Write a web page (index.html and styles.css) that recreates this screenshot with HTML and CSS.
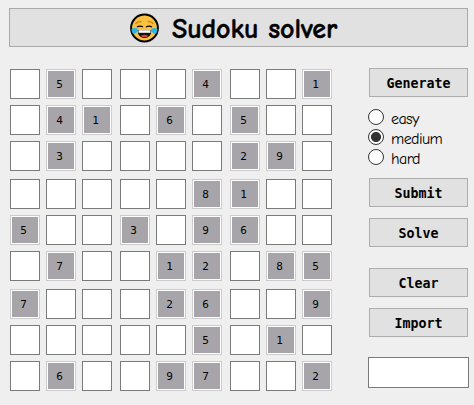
FILE: index.html
```html
<!DOCTYPE html>
<html lang="en">
<head>
    <meta charset="UTF-8">
    <meta name="viewport" content="width=device-width, initial-scale=1.0">
    <title>Sudoku solver</title>
    <link rel="stylesheet" href="styles.css">
</head>
<body>
    <header class="title-bar">
        <svg class="logo" viewBox="0 0 30 30">
            <circle cx="15" cy="15" r="13.4" fill="#fbc040" stroke="#000" stroke-width="2"/>
            <path d="M6 11Q7.500 8.500 12 8.500M18 8.500Q22.500 8.500 24 11" fill="none" stroke="#d38b16" stroke-width="1.7"/>
            <path d="M7.500 14Q10.500 12.200 13.500 14M16.500 14Q19.500 12.200 22.500 14" fill="none" stroke="#000" stroke-width="1.3"/>
            <path d="M8 17H22Q21.500 25 15 25Q8.500 25 8 17Z" fill="#111"/>
            <path d="M9 17.200H21V19.800H9Z" fill="#fff"/>
            <path d="M11 23Q15 20.500 19 23Q15 25.600 11 23Z" fill="#d8432b"/>
            <path d="M2 16Q4.500 14.500 8 15.500Q8.500 20 4.800 20.800Q2 20.500 2 16ZM28 16Q25.500 14.500 22 15.500Q21.500 20 25.200 20.800Q28 20.500 28 16Z" fill="#27b5e8"/>
        </svg>
        <h1>Sudoku solver</h1>
    </header>
    <main>
        <div class="board"></div>
        <div class="side">
            <button class="btn generate-btn">Generate</button>
            <div class="levels">
                <label><input type="radio" name="level"><span>easy</span></label>
                <label><input type="radio" name="level" checked><span>medium</span></label>
                <label><input type="radio" name="level"><span>hard</span></label>
            </div>
            <button class="btn">Submit</button>
            <button class="btn">Solve</button>
            <button class="btn clear-btn">Clear</button>
            <button class="btn">Import</button>
            <input class="import-field" type="text">
        </div>
    </main>
    <script>
        //0 is an empty cell
        const puzzle = [
            "050004001",
            "041060500",
            "030000290",
            "000008100",
            "500309600",
            "070012085",
            "700026009",
            "000005010",
            "060097002"
        ];
        const board = document.querySelector(".board");

        // the board is 9 boxes with 9 cells in each
        for(let b=0; b<9; b++){
            const box = document.createElement("div");
            box.classList.add("box");
            for(let c=0; c<9; c++){
                const row = Math.floor(b/3)*3 + Math.floor(c/3);
                const col = (b%3)*3 + c%3;
                const cell = document.createElement("div");
                cell.classList.add("cell");
                if(puzzle[row][col] !== "0"){
                    cell.classList.add("given");
                    cell.innerText = puzzle[row][col];
                }else{
                    cell.contentEditable = "true";
                }
                box.appendChild(cell);
            }
            board.appendChild(box);
        }
    </script>
</body>
</html>
```
FILE: styles.css
```css
*{
    margin: 0;
    padding: 0;
    box-sizing: border-box;
}

body{
    background-color: #efefef;
    padding: 8px 5px 0 9px;
}

.title-bar{
    width: 459px;
    height: 39px;
    display: flex;
    align-items: center;
    padding-left: 119px;
    background-color: #e1e1e1;
    border: 1px solid #a9a9a9;
}
.logo{
    width: 31px;
    height: 30px;
    margin-right: 12px;
}
h1{
    font-family: "Comic Sans MS", "Comic Neue", "Noto Sans", sans-serif;
    font-size: 28px;
    line-height: 36px;
    font-weight: bold;
    letter-spacing: -0.1px;
    -webkit-text-stroke: 0.4px #000000;
    padding-top: 2px;
    white-space: nowrap;
}

main{
    display: flex;
    padding-left: 1px;
    margin-top: 22px;
}
.board{
    display: grid;
    grid-template-columns: repeat(3, 102px);
    gap: 8px;
    height: 322px;
}
.box{
    display: grid;
    grid-template-columns: repeat(3, 30px);
    grid-auto-rows: 30px;
    gap: 6px;
}
.cell{
    background-color: #ffffff;
    border: 1px solid #7a7a7a;
    font-family: "DejaVu Sans Mono", monospace;
    font-size: 11px;
    line-height: 30px;
    text-align: center;
    padding-right: 3px;
}
.given{
    border-color: #cccccc;
    background-color: #a7a5aa;
    box-shadow: inset 0 0 0 1px #ffffff;
}

.side{
    width: 101px;
    margin: -1px 0 0 36px;
    display: flex;
    flex-direction: column;
    align-items: center;
}
.btn{
    width: 99px;
    height: 29px;
    margin-bottom: 11px;
    padding-top: 2px;
    background-color: #e1e1e1;
    border: 1px solid #adadad;
    font-family: Consolas, "DejaVu Sans Mono", monospace;
    font-size: 13.3px;
    font-weight: bold;
    color: #000000;
}
.generate-btn{
    margin-bottom: 10px;
}
.levels{
    align-self: flex-start;
    margin-bottom: 11px;
}
.levels label{
    display: flex;
    align-items: center;
    height: 20px;
    font-family: "Comic Sans MS", "Comic Neue", "Noto Sans", sans-serif;
    font-size: 16px;
    font-weight: 400;
    line-height: 20px;
}
.levels span{
    position: relative;
    top: 2px;
    letter-spacing: -0.6px;
}
.levels input{
    appearance: none;
    width: 16px;
    height: 16px;
    margin-right: 7px;
    border: 1px solid #333333;
    border-radius: 50%;
    background-color: #ffffff;
}
.levels input:checked{
    background-image: radial-gradient(circle, #333333 4.6px, #ffffff 5.4px);
}
.clear-btn{
    margin-top: 10px;
}
.import-field{
    width: 101px;
    height: 31px;
    margin-top: 9px;
    border: 1px solid #7a7a7a;
    background-color: #ffffff;
}
```
